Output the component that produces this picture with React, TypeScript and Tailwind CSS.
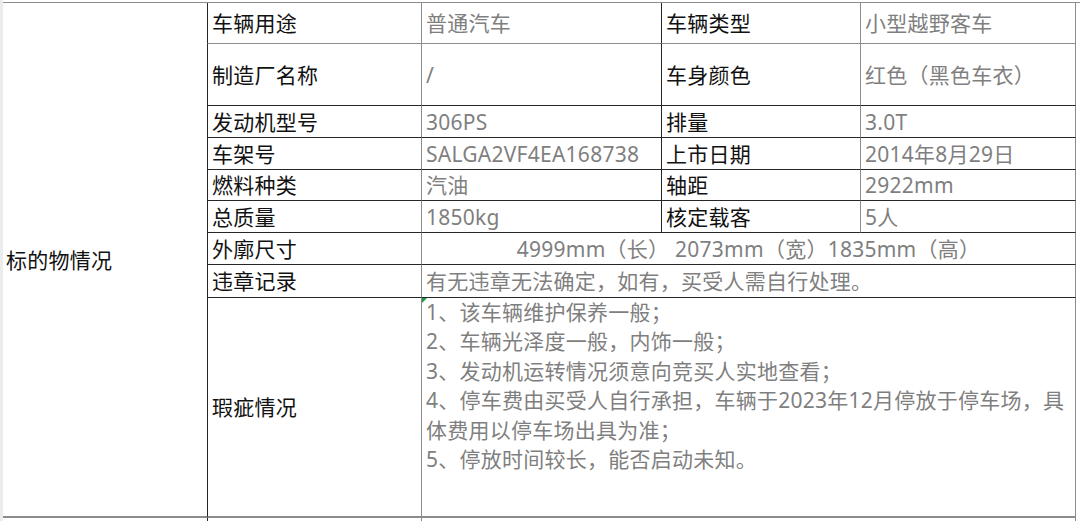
import React from "react";

const FONT = { fontFamily: '"Noto Sans", "Noto Sans CJK SC", sans-serif' };

type Row = { h: string; l1: string; v1: string; l2: string; v2: string; bb: string };

const rows: Row[] = [
  { h: "h-[41px]", l1: "车辆用途", v1: "普通汽车", l2: "车辆类型", v2: "小型越野客车", bb: "border-b-[#8c8c8c]" },
  { h: "h-[62px]", l1: "制造厂名称", v1: "/", l2: "车身颜色", v2: "红色（黑色车衣）", bb: "border-b-[#262626]" },
  { h: "h-[32px]", l1: "发动机型号", v1: "306PS", l2: "排量", v2: "3.0T", bb: "border-b-[#262626]" },
  { h: "h-[32px]", l1: "车架号", v1: "SALGA2VF4EA168738", l2: "上市日期", v2: "2014年8月29日", bb: "border-b-[#262626]" },
  { h: "h-[31px]", l1: "燃料种类", v1: "汽油", l2: "轴距", v2: "2922mm", bb: "border-b-[#262626]" },
  { h: "h-[32px]", l1: "总质量", v1: "1850kg", l2: "核定载客", v2: "5人", bb: "border-b-[#262626]" },
];

const flaws = [
  "1、该车辆维护保养一般；",
  "2、车辆光泽度一般，内饰一般；",
  "3、发动机运转情况须意向竞买人实地查看；",
  "4、停车费由买受人自行承担，车辆于2023年12月停放于停车场，具",
  "体费用以停车场出具为准；",
  "5、停放时间较长，能否启动未知。",
];

export default function App() {
  return (
    <div className="w-[1080px] h-[521px] bg-white overflow-hidden flex" style={FONT}>
      <div className="w-[3px] h-full bg-[#ececec] shrink-0" />
      <div className="flex-1 flex flex-col">
        <div className="h-[2px] shrink-0" />
        <div className="grid grid-cols-[204px_214px_240px_199px_216px] border-t border-t-[#8c8c8c] text-[21px] leading-[30px] tracking-[0.25px]">
          {/* Left merged cell */}
          <div className="col-start-1 row-start-1 row-span-9 flex items-center pl-[3px] text-[#111] border-b-2 border-b-[#8c8c8c]">
            标的物情况
          </div>

          {rows.map((r, i) => (
            <React.Fragment key={i}>
              <div className={`col-start-2 ${r.h} flex items-center pl-[4px] text-[#111] border-l border-l-[#262626] border-b ${r.bb}`}>
                {r.l1}
              </div>
              <div className={`${r.h} flex items-center pl-[4px] text-[#7f7f7f] border-l border-l-[#8c8c8c] border-b ${r.bb}`}>
                {r.v1}
              </div>
              <div className={`${r.h} flex items-center pl-[4px] text-[#111] border-l border-l-[#262626] border-b ${r.bb}`}>
                {r.l2}
              </div>
              <div className={`${r.h} flex items-center pl-[4px] text-[#7f7f7f] border-l border-l-[#8c8c8c] border-r border-r-[#8c8c8c] border-b ${r.bb}`}>
                {r.v2}
              </div>
            </React.Fragment>
          ))}

          <div className="col-start-2 h-[32px] flex items-center pl-[4px] text-[#111] border-l border-l-[#262626] border-b border-b-[#262626]">
            外廓尺寸
          </div>
          <div className="col-span-3 h-[32px] flex items-center justify-center text-[#7f7f7f] border-l border-l-[#8c8c8c] border-r border-r-[#8c8c8c] border-b border-b-[#262626]">
            4999mm（长） 2073mm（宽）1835mm（高）
          </div>

          <div className="col-start-2 h-[33px] flex items-center pl-[4px] text-[#111] border-l border-l-[#262626] border-b border-b-[#262626]">
            违章记录
          </div>
          <div className="col-span-3 h-[33px] flex items-center pl-[4px] text-[#7f7f7f] border-l border-l-[#8c8c8c] border-r border-r-[#8c8c8c] border-b border-b-[#262626]">
            有无违章无法确定，如有，买受人需自行处理。
          </div>

          <div className="col-start-2 h-[220px] flex items-center pl-[4px] text-[#111] border-l border-l-[#262626] border-b-2 border-b-[#8c8c8c]">
            瑕疵情况
          </div>
          <div className="relative col-span-3 h-[220px] pl-[4px] text-[#7f7f7f] leading-[29.4px] border-l border-l-[#8c8c8c] border-r border-r-[#8c8c8c] border-b-2 border-b-[#8c8c8c]">
            <svg className="absolute left-0 top-0" width="5" height="5" viewBox="0 0 5 5">
              <polygon points="0,0 5,0 0,5" fill="#1e9a3c" />
            </svg>
            {flaws.map((f, i) => (
              <div key={i} className="whitespace-nowrap">{f}</div>
            ))}
          </div>

          <div className="col-start-2 h-[6px] border-l border-l-[#262626]" />
          <div className="col-span-3 h-[6px] border-l border-l-[#8c8c8c] border-r border-r-[#8c8c8c]" />
        </div>
      </div>
    </div>
  );
}
